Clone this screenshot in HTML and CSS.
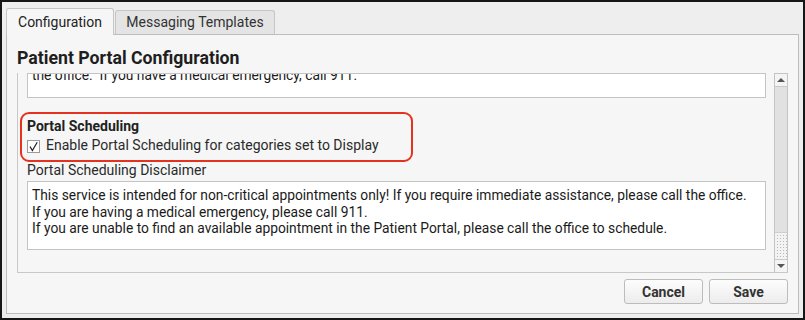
FILE: index.html
```html
<!DOCTYPE html>
<html>
<head>
<meta charset="utf-8">
<link rel="stylesheet" href="styles.css">
</head>
<body>
<div class="window">
  <div class="tabs">
    <div class="tab tab-active">Configuration</div>
    <div class="tab">Messaging Templates</div>
  </div>
  <div class="panel">
    <h1 class="title">Patient Portal Configuration</h1>
    <div class="scroll">
      <div class="scroll-content">
        <div class="textbox textbox-short">
          <div class="textbox-scrolled">the office.&nbsp; If you have a medical emergency, call 911.</div>
        </div>
        <div class="section">
          <div class="section-title">Portal Scheduling</div>
          <div class="check-row">
            <span class="checkbox"><svg width="11" height="11" viewBox="0 0 11 11"><path d="M2 5.6 L4.4 9.6 L9.2 1.2" fill="none" stroke="#222" stroke-width="1.2"/></svg></span>
            <span class="check-label">Enable Portal Scheduling for categories set to Display</span>
          </div>
        </div>
        <div class="field-label">Portal Scheduling Disclaimer</div>
        <div class="textbox textbox-tall">
          <div>This service is intended for non-critical appointments only! If you require immediate assistance, please call the office.</div>
          <div>If you are having a medical emergency, please call 911.</div>
          <div>If you are unable to find an available appointment in the Patient Portal, please call the office to schedule.</div>
        </div>
      </div>
      <div class="scrollbar">
        <div class="sb-btn sb-up"><span class="tri-up"></span></div>
        <div class="sb-thumb"></div>
        <div class="sb-grip"></div>
        <div class="sb-btn sb-down"><span class="tri-down"></span></div>
      </div>
    </div>
    <div class="actions">
      <button class="btn">Cancel</button>
      <button class="btn">Save</button>
    </div>
  </div>
</div>
</body>
</html>
```

FILE: styles.css
```css
* { box-sizing: border-box; }
html, body { margin: 0; padding: 0; }
body {
  width: 805px;
  height: 320px;
  font-family: Roboto, "Liberation Sans", sans-serif;
  color: #212121;
  overflow: hidden;
}
.window {
  width: 805px;
  height: 320px;
  border: 2px solid #161616;
  background: #eeeeee;
  padding: 6px 4px 4px 4px;
  display: flex;
  flex-direction: column;
}
.tabs {
  display: flex;
  align-items: flex-end;
  height: 26px;
  position: relative;
  z-index: 1;
}
.tab {
  height: 24px;
  padding: 0;
  border: 1px solid #c6c6c6;
  border-bottom: none;
  border-radius: 3px 3px 0 0;
  background: #e4e4e4;
  font-size: 14px;
  line-height: 23px;
  color: #333;
  margin-left: 1px;
  width: 160px;
  text-align: center;
  white-space: nowrap;
}
.tab-active {
  height: 27px;
  margin-left: 0;
  margin-bottom: -1px;
  background: #f6f6f6;
  width: 108px;
  line-height: 26px;
  color: #222;
}
.panel {
  flex: 1;
  border: 1px solid #bdbdbd;
  background: #f6f6f6;
  padding: 0 10px 9px 10px;
  display: flex;
  flex-direction: column;
}
.title {
  margin: 12px 0 4px 0;
  font-size: 17.7px;
  line-height: 22px;
  font-weight: bold;
  color: #1e1e1e;
}
.scroll {
  height: 200px;
  display: flex;
  border-left: 1px solid #c8c8c8;
  border-bottom: 1px solid #c8c8c8;
}
.scroll-content {
  flex: 1;
  overflow: hidden;
  padding: 0 8px 0 9px;
}
.textbox {
  background: #ffffff;
  border: 1px solid #c4c4c4;
  font-size: 13.8px;
  color: #1a1a1a;
}
.textbox-short {
  height: 25px;
  overflow: hidden;
  padding-left: 4px;
}
.textbox-scrolled {
  line-height: 17px;
  margin-top: -7px;
}
.section {
  width: 393px;
  margin: 14px 0 0 -7px;
  border: 2px solid #e5321f;
  border-radius: 9px;
  padding: 4px 5px 6px 5px;
}
.section-title {
  font-size: 14px;
  line-height: 17px;
  font-weight: bold;
}
.check-row {
  margin-top: 2px;
  display: flex;
  align-items: center;
  height: 17px;
  font-size: 14px;
}
.checkbox {
  width: 13px;
  height: 13px;
  border: 1px solid #9a9a9a;
  background: #fff;
  margin-right: 6px;
  margin-top: 2px;
  flex: none;
  display: flex;
  align-items: center;
  justify-content: center;
}
.check-label {
  line-height: 17px;
  color: #2a2a2a;
}
.field-label {
  font-size: 14px;
  line-height: 17px;
  margin-top: 0;
  color: #2a2a2a;
}
.textbox-tall {
  margin-top: 2px;
  height: 69px;
  padding: 5px 4px 0 4px;
  line-height: 16.5px;
}
.scrollbar {
  width: 14px;
  border: 1px solid #c4c4c4;
  border-bottom: none;
  display: flex;
  flex-direction: column;
  background: #f2f2f2;
}
.sb-btn {
  display: flex;
  align-items: center;
  justify-content: center;
  background: #f4f4f4;
}
.sb-up { height: 13px; border-bottom: 1px solid #c8c8c8; }
.sb-down { height: 13px; border-top: 1px solid #c8c8c8; }
.tri-up {
  width: 0; height: 0;
  border-left: 4px solid transparent;
  border-right: 4px solid transparent;
  border-bottom: 4px solid #555;
}
.tri-down {
  width: 0; height: 0;
  border-left: 4px solid transparent;
  border-right: 4px solid transparent;
  border-top: 4px solid #555;
}
.sb-thumb {
  flex: 1;
  background: #e1e1e1;
  border-bottom: 1px solid #cfcfcf;
}
.sb-grip {
  height: 26px;
  background-color: #f3f3f3;
  background-image: radial-gradient(circle, #b8b8b8 0.7px, transparent 0.8px);
  background-size: 3px 3px;
  background-position: 1px 1px;
}
.actions {
  margin-top: 6px;
  display: flex;
  justify-content: flex-end;
  gap: 6px;
}
.btn {
  width: 79px;
  height: 25px;
  border: 1px solid #bcbcbc;
  border-radius: 3px;
  background: linear-gradient(#fdfdfd, #ececec);
  font-family: Roboto, "Liberation Sans", sans-serif;
  font-weight: bold;
  font-size: 14px;
  color: #333;
  padding: 0;
}
```
